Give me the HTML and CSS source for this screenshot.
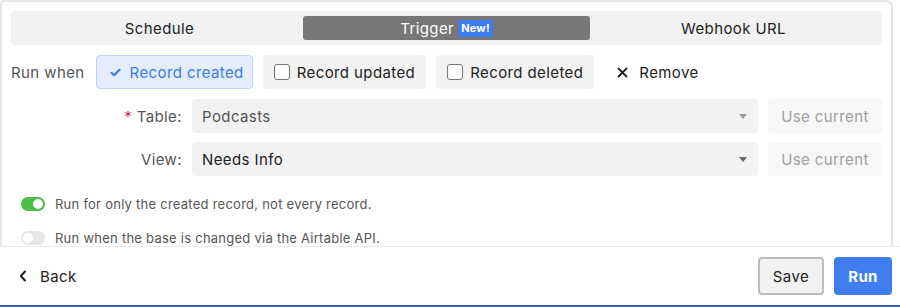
FILE: index.html
```html
<!DOCTYPE html>
<html lang="en">

<head>
    <meta charset="UTF-8">
    <meta name="viewport" content="width=device-width, initial-scale=1.0">
    <title>Trigger settings</title>
    <link rel="stylesheet" href="styles.css">
</head>

<body>
    <!-- Scrollable settings panel -->
    <div class="panel">
        <div class="tabs">
            <div class="tab">Schedule</div>
            <div class="tab active">Trigger <span class="badge">New!</span></div>
            <div class="tab">Webhook URL</div>
        </div>

        <div class="run-when">
            <span class="run-label">Run when</span>
            <button class="choice selected">
                <svg class="check" width="11" height="9" viewBox="0 0 11 9">
                    <path d="M1.5 4.8 L4.2 7.3 L9.5 1.8" fill="none" stroke="currentColor" stroke-width="2.2" stroke-linecap="round" stroke-linejoin="round"/>
                </svg>
                Record created
            </button>
            <button class="choice"><span class="box"></span>Record updated</button>
            <button class="choice"><span class="box"></span>Record deleted</button>
            <button class="remove">
                <svg width="11" height="11" viewBox="0 0 11 11">
                    <path d="M1.5 1.5 L9.5 9.5 M9.5 1.5 L1.5 9.5" stroke="#222" stroke-width="1.8" stroke-linecap="round"/>
                </svg>
                Remove
            </button>
        </div>

        <div class="field">
            <label class="field-label"><span class="required">*</span> Table:</label>
            <div class="select muted">Podcasts<span class="caret"></span></div>
            <button class="use-current">Use current</button>
        </div>

        <div class="field">
            <label class="field-label">View:</label>
            <div class="select">Needs Info<span class="caret dark"></span></div>
            <button class="use-current">Use current</button>
        </div>

        <div class="option">
            <span class="toggle on"><span class="knob"></span></span>
            Run for only the created record, not every record.
        </div>
        <div class="option">
            <span class="toggle"><span class="knob"></span></span>
            Run when the base is changed via the Airtable API.
        </div>
    </div>

    <!-- Footer with actions -->
    <footer class="footer">
        <a class="back" href="#">
            <svg width="8" height="12" viewBox="0 0 8 12">
                <path d="M6 1.5 L1.8 6 L6 10.5" fill="none" stroke="#222" stroke-width="2" stroke-linecap="round" stroke-linejoin="round"/>
            </svg>
            Back
        </a>
        <div class="actions">
            <button class="save">Save</button>
            <button class="run">Run</button>
        </div>
    </footer>
</body>

</html>
```

FILE: styles.css
```css
/* General */
body {
    margin: 0;
    width: 900px;
    height: 307px;
    font-family: 'Inter', 'Liberation Sans', sans-serif;
    font-size: 15px;
    letter-spacing: 0.4px;
    color: #333333;
    background-color: #ffffff;
    overflow: hidden;
}

button {
    font-family: inherit;
    font-size: 15px;
    letter-spacing: inherit;
    border: none;
    cursor: pointer;
}

/* Panel */
.panel {
    width: 871px;
    height: 235px;
    padding: 9px 9px 0 9px;
    border: 2px solid #e6e6e6;
    border-bottom: none;
    border-radius: 4px 7px 0 0;
    overflow: hidden;
}

/* Tabs */
.tabs {
    display: grid;
    grid-template-columns: 1fr 1fr 1fr;
    padding: 5px;
    background-color: #f2f2f2;
    border-radius: 4px;
}

.tab {
    height: 24px;
    display: flex;
    align-items: center;
    justify-content: center;
    color: #222222;
    border-radius: 3px;
}

.tab.active {
    background-color: #777777;
    color: #ffffff;
}

.badge {
    margin-left: 4px;
    padding: 1px 3px;
    font-size: 11px;
    font-weight: 700;
    letter-spacing: 0.2px;
    line-height: 15px;
    background-color: #3d7cf0;
    color: #ffffff;
    border-radius: 3px;
}

/* Run when */
.run-when {
    display: flex;
    align-items: center;
    gap: 10px;
    margin-top: 10px;
    height: 34px;
}

.run-label {
    color: #555555;
    margin-right: 1px;
}

.choice {
    height: 34px;
    display: flex;
    align-items: center;
    gap: 7px;
    padding: 0 11px 0 11px;
    background-color: #f2f2f2;
    color: #222222;
    border-radius: 4px;
    box-sizing: border-box;
}

.choice.selected {
    background-color: #e3edfc;
    border: 1px solid #bcd3f6;
    color: #3b7be8;
    padding: 0 8px 0 13px;
    gap: 9px;
}

.box {
    width: 16px;
    height: 16px;
    border: 1.5px solid #777777;
    border-radius: 3px;
    background-color: #ffffff;
    box-sizing: border-box;
}

.remove {
    display: flex;
    align-items: center;
    gap: 11px;
    margin-left: 13px;
    background: none;
    color: #222222;
    padding: 0;
}

/* Table / view fields */
.field {
    display: flex;
    align-items: center;
    gap: 10px;
    margin-top: 10px;
    height: 34px;
}

.field + .field {
    margin-top: 9px;
}

.field-label {
    width: 171px;
    text-align: right;
    color: #555555;
}

.required {
    color: #e8245a;
}

.select {
    position: relative;
    flex: 1;
    height: 34px;
    display: flex;
    align-items: center;
    padding-left: 10px;
    background-color: #f2f2f2;
    border-radius: 4px;
    color: #222222;
}

.select.muted {
    color: #555555;
}

.caret {
    position: absolute;
    right: 11px;
    top: 15px;
    border-left: 4px solid transparent;
    border-right: 4px solid transparent;
    border-top: 5px solid #9a9a9a;
}

.caret.dark {
    border-top-color: #666666;
}

.use-current {
    width: 114px;
    height: 34px;
    background-color: #f7f7f7;
    color: #a0a0a0;
    border-radius: 4px;
}

/* Toggles */
.option {
    display: flex;
    align-items: center;
    gap: 10px;
    margin: 17px 0 0 10px;
    height: 21px;
    font-size: 13px;
    letter-spacing: 0.25px;
    color: #555555;
}

.option + .option {
    margin-top: 13px;
}

.toggle {
    width: 24px;
    height: 14px;
    border-radius: 7px;
    background-color: #e6e6e6;
    display: flex;
    align-items: center;
    padding: 0 2px;
    box-sizing: border-box;
}

.toggle .knob {
    width: 10px;
    height: 10px;
    border-radius: 50%;
    background-color: #ffffff;
}

.toggle.on {
    background-color: #4bbf45;
    justify-content: flex-end;
}

/* Footer */
.footer {
    height: 58px;
    border-top: 1px solid #ececec;
    border-bottom: 2px solid #2a64c6;
    display: flex;
    align-items: center;
    justify-content: space-between;
    padding: 0 8px 0 19px;
}

.back {
    display: flex;
    align-items: center;
    gap: 13px;
    color: #222222;
    text-decoration: none;
}

.actions {
    display: flex;
    gap: 10px;
}

.save {
    width: 66px;
    height: 38px;
    background-color: #f2f2f2;
    border: 2px solid #bdbdbd;
    border-radius: 4px;
    color: #222222;
}

.run {
    width: 58px;
    height: 38px;
    background-color: #407ef0;
    color: #ffffff;
    font-weight: 700;
    border-radius: 4px;
}
```
